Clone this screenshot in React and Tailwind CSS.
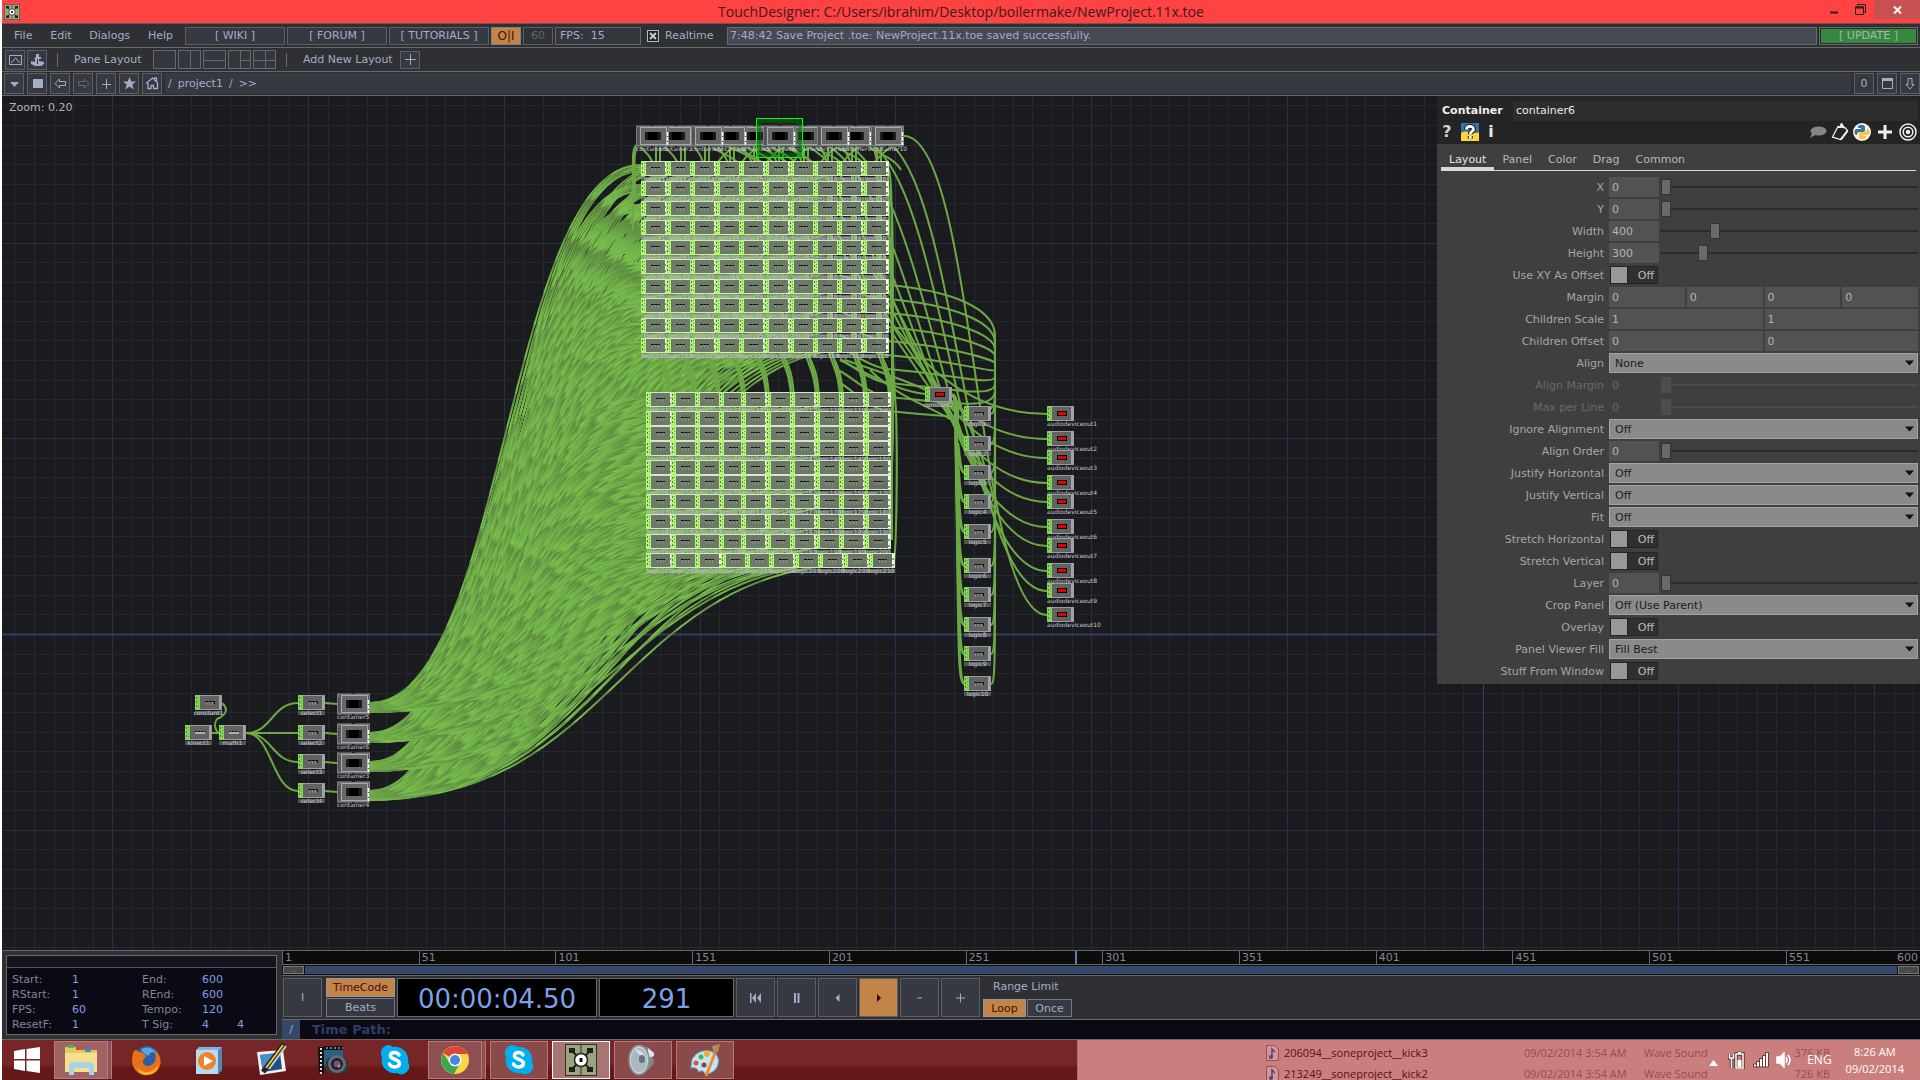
import React from 'react';

const GRID = 19.575;
const AXIS_X = 1482.6;
const AXIS_Y = 635;

const WIRE_PHASES = [0, 1, 2, 3, 4, 5, 6, 7];

const upperCols = [641, 666, 690, 715, 739, 764, 789, 813, 837, 862];
const upperRows = [161, 181, 201, 220, 240, 259, 279, 298, 318, 338];
const lowerCols = [646, 671, 695, 719, 741, 766, 790, 815, 839, 864];
const lastCols = [646, 671, 695, 721, 745, 769, 794, 818, 843, 868];
const lowerRows = [392, 411, 426, 441, 460, 475, 494, 514, 534, 553];
const topContainers = [654, 678, 709, 732, 756, 781, 807, 835, 857, 889];
// back to front
const containerOrder = [1, 4, 3, 6, 8, 0, 2, 5, 7, 9];
const logicRows = [406, 436, 465, 494, 524, 558, 587, 617, 646, 676];
const audioRows = [406, 431, 450, 475, 494, 519, 538, 563, 583, 607];
const sourceRows = [695, 725, 754, 783];
const sourceNames = ['container5', 'container6', 'container3', 'container4'];

const gridNodes = [];
upperRows.forEach((y, r) => upperCols.forEach((x, c) => gridNodes.push({ x, y, name: `logic${r * 10 + c + 11}` })));
lowerRows.forEach((y, r) =>
    (r === 9 ? lastCols : lowerCols).forEach((x, c) => gridNodes.push({ x, y, name: `logic${r * 10 + c + 111}` }))
);

const curve = (x1, y1, x2, y2) => {
    const mid = (x1 + x2) / 2;
    return `M${x1} ${y1}C${mid} ${y1} ${mid} ${y2} ${x2} ${y2}`;
};

const fanWires = [];
gridNodes.forEach((node, i) => {
    sourceRows.forEach((sy, s) => {
        fanWires.push({
            d: curve(370, sy + 8 + (i / 200) * 9, node.x, node.y + 4 + s * 2),
            color: `url(#wire${(i * 3 + s * 5 + (i >> 3)) % 8})`,
        });
    });
});

const columnWires = [];
topContainers.forEach((cx, c) => {
    const x = upperCols[c] + 27;
    columnWires.push(`M${cx - 14} 143C${cx - 18} 150 ${x - 10} 150 ${x - 10} 190V345C${x - 10} 360 ${x + 2} 360 ${x + 3} 400V540`);
    columnWires.push(`M${x - 12} 143V345C${x - 12} 360 ${x} 370 ${x} 400`);
    columnWires.push(`M${x - 8} 143V350C${x - 6} 370 ${x + 1} 370 ${x + 1} 400`);
    if (c > 2) {
        columnWires.push(`M${cx - 15} 143C${cx - 30} 150 ${cx + 2} 152 ${cx + 12} 170`);
        columnWires.push(`M${cx + 14} 143C${cx + 4} 146 ${cx - 10} 150 ${cx - 22} 176`);
    }
});

const sideWires = [
    'M636 145C632 150 633 160 633 175V230',
    'M638 145C634 150 634 160 635 185V200',
    'M888 168C892 172 892 200 892 330V480C892 520 890 540 888 541',
    'M888 188C893 192 893 230 893 330V430C893 440 891 500 889 520',
    'M888 172C891 260 890 340 896 410C898 470 896 550 894 560',
];

function WireGradients() {
    return (
        <defs>
            {WIRE_PHASES.map((p) => (
                <linearGradient
                    key={p}
                    id={`wire${p}`}
                    gradientUnits="userSpaceOnUse"
                    spreadMethod="repeat"
                    x1={p * 11}
                    y1={p * 13}
                    x2={p * 11 + 16 + p}
                    y2={p * 13 - 30 - p * 2}
                >
                    <stop offset="0" stopColor="#7abf4d" />
                    <stop offset=".4" stopColor="#70ae48" />
                    <stop offset=".85" stopColor="#5d8a41" />
                    <stop offset="1" stopColor="#7abf4d" />
                </linearGradient>
            ))}
        </defs>
    );
}

function GridLines() {
    const lines = [];
    for (let i = -75; i <= 90; i++) {
        const x = Math.round(AXIS_X + i * GRID) + 0.5;
        const color = i === 0 ? '#3b3c68' : i % 10 === 0 ? '#2d2d47' : '#27282f';
        lines.push(<path key={`v${i}`} d={`M${x} 96V2000`} stroke={color} />);
    }
    for (let i = -28; i <= 60; i++) {
        const y = Math.round(AXIS_Y + i * GRID) - 0.5;
        const color = i === 0 ? '#363868' : i % 10 === 0 ? '#2d2d47' : '#27282f';
        lines.push(<path key={`h${i}`} d={`M0 ${y}H3000`} stroke={color} strokeWidth={i === 0 ? 2 : 1} />);
    }
    return <g>{lines}</g>;
}

function Label({ x, y, anchor = 'middle', children }) {
    return (
        <text x={x} y={y} textAnchor={anchor} className="fill-[#c4c6ce] font-['DejaVu_Sans'] text-[6px]">
            {children}
        </text>
    );
}

function ChopNode({ x, y, name, variant = 'wave', labelAnchor, lit }) {
    return (
        <g transform={`translate(${x} ${y})`}>
            {labelAnchor !== 'start' && <rect y="16" width="27" height="4" fill={lit ? '#a2a6a2' : '#8b8d96'} opacity=".5" />}
            <rect width="27" height="15" fill={lit ? '#6f756c' : '#626262'} fillOpacity={lit ? 0.93 : 1} />
            <rect x=".5" y=".5" width="26" height="14" fill="none" stroke={lit ? '#d3ecbd' : '#9b9ca0'} />
            <rect width="5" height="15" fill={lit ? '#b4f47a' : '#86d35b'} />
            <path d="M1.5 2V14" stroke="#4f8238" strokeDasharray="2 2" />
            <path d="M3.5 2V14" stroke="#65a045" strokeDasharray="1 2" />
            <path d="M25 1V14" stroke={lit ? '#8f9488' : '#a4a5a8'} strokeWidth="2" />
            {lit && <path d="M25 1V14" stroke="#fcfff0" strokeWidth="2" strokeDasharray="4 2" />}
            {variant === 'red' && (
                <>
                    <rect x="10" y="5" width="10" height="5" fill="#000" />
                    <rect x="11" y="6" width="8" height="3" fill="#e00000" />
                </>
            )}
            {variant === 'wave' && (
                <>
                    <path d="M10 6.500H20" stroke="#0c0c0c" strokeWidth="1.200" strokeDasharray="3 .6" />
                    <path d="M11.500 7V10M14.500 7V10M17.500 7V10" stroke="#8c8c8c" />
                    <path d="M19.500 6V9" stroke={lit ? '#4f9434' : '#111'} />
                </>
            )}
            {variant === 'line' && (
                <>
                    <path d="M10 6.500H20" stroke="#111" strokeDasharray="2 1" />
                    <path d="M10 8H20" stroke="#fff" strokeWidth="1" />
                </>
            )}
            <Label x={labelAnchor === 'start' ? 0 : 13.5} y="20" anchor={labelAnchor}>
                {name}
            </Label>
        </g>
    );
}

function ContainerNode({ x, y, name, lit }) {
    return (
        <g transform={`translate(${x} ${y})`}>
            <path d="M0 -1.500H15M18 -1.500H33M0 19.500H15M18 19.500H33" stroke="#55565a" />
            <rect x=".5" y="-.5" width="32" height="19" fill="#5c5c5e" stroke="#7c7d80" />
            <rect x="4.500" y=".5" width="26" height="17" fill="#676769" stroke="#a9a9ab" />
            <path d="M2 3V16" stroke="#37383b" strokeDasharray="2 1" />
            <rect x="9" y="5" width="16" height="8" fill="#1c1c1e" />
            <rect x="12" y="5" width="10" height="8" fill="#000" />
            <path d="M31.500 5V18" stroke={lit ? '#f4ffe8' : '#c4c4c4'} strokeWidth="1.500" strokeDasharray="4 1" />
            <Label x="0" y="24" anchor="start">
                {name}
            </Label>
        </g>
    );
}

function Network() {
    return (
        <svg className="absolute inset-0 h-full w-full" role="img" aria-label="Operator network">
            <WireGradients />
            <g transform="translate(-2 -96)">
                <GridLines />
                <g fill="none" strokeWidth="2">
                    {fanWires.map((w, i) => (
                        <path key={i} d={w.d} stroke={w.color} />
                    ))}
                </g>
                <g fill="none" stroke="#6ca945" strokeWidth="2">
                    {columnWires.map((d, i) => (
                        <path key={i} d={d} />
                    ))}
                    {sideWires.map((d, i) => (
                        <path key={i} d={d} />
                    ))}
                    {/* containers to audio devices */}
                    {topContainers.map((cx, i) => (
                        <path key={i} d={curve(cx + 15, 136, 1047, audioRows[i] + 8)} />
                    ))}
                    {/* logic outputs looping back to the grid */}
                    {logicRows.map((y, i) => (
                        <path
                            key={i}
                            d={`M991 ${y + 8}C996 ${y + 8} 995 ${y - 20} 995 ${Math.min(y - 20, 420)}V${335 + i * 7}C994 ${308 + i * 13} 950 ${290 + i * 14} 887 ${285 + i * 14}C870 ${283 + i * 14} 850 ${280 + i * 12} 840 ${275 + i * 12}`}
                        />
                    ))}
                    {/* fan out of the red switch */}
                    {logicRows.map((y, i) => (
                        <path key={i} d={`M952 395C958 396 955 410 957 ${430 + i * 8}C959 ${y - 30} 958 ${y + 8} 965 ${y + 8}`} strokeWidth="3" />
                    ))}
                    <path d="M840 360C870 375 900 392 926 394M845 360C880 372 900 378 926 390M870 370C900 400 940 410 958 424M952 395C962 410 980 440 994 500M888 290C920 360 950 400 990 500M890 330C930 390 960 430 992 480" />
                    <path d="M222 703C232 712 220 718 217 719C213 724 216 732 219 733M212 733H219M325 703L337 704M325 733L337 734M325 762L337 763M325 791L337 792" />
                    {sourceRows.map((y) => (
                        <path key={y} d={curve(246, 733, 298, y + 8)} />
                    ))}
                </g>

                {gridNodes.map((n, i) => (
                    <ChopNode key={i} {...n} lit />
                ))}
                {containerOrder.map((i) => (
                    <ContainerNode key={i} x={topContainers[i] - 18} y={127} name={`container${i + 1}`} lit />
                ))}
                <rect x="759" y="121" width="41" height="34" fill="none" stroke="#006e0a" strokeOpacity=".5" strokeWidth="5" />
                <rect x="756.500" y="118.500" width="46" height="39" fill="none" stroke="#00ff00" />

                <ChopNode x={925} y={387} name="constant2" variant="red" />
                {logicRows.map((y, i) => (
                    <ChopNode key={y} x={964} y={y} name={`logic${i + 1}`} />
                ))}
                {audioRows.map((y, i) => (
                    <ChopNode key={y} x={1047} y={y} name={`audiodeviceout${i + 1}`} variant="red" labelAnchor="start" />
                ))}
                <ChopNode x={195} y={695} name="constant1" />
                <ChopNode x={185} y={725} name="kinect1" variant="line" />
                <ChopNode x={219} y={725} name="math1" variant="line" />
                {sourceRows.map((y, i) => (
                    <g key={y}>
                        <ChopNode x={298} y={y} name={`select${i + 1}`} />
                        <ContainerNode x={337} y={y} name={sourceNames[i]} lit />
                    </g>
                ))}
            </g>
        </svg>
    );
}

function DesignerLogo({ className }) {
    return (
        <svg className={className} viewBox="0 0 32 32">
            <rect width="32" height="32" fill="#2c3026" />
            <rect x="1" y="1" width="30" height="30" fill="#9aa57d" />
            <path d="M16 1V31" stroke="#2c3026" />
            <path d="M7 7L25 25M25 7L7 25" stroke="#20231c" strokeWidth="2" />
            <path d="M4 4h6v5H4zM22 4h6v5h-6zM4 23h6v5H4zM22 23h6v5h-6z" fill="#20231c" />
            <circle cx="16" cy="16" r="6.500" fill="#fff" stroke="#20231c" strokeWidth="1.500" />
            <rect x="14.500" y="14" width="3" height="4" fill="#111" />
        </svg>
    );
}

function TitleBar() {
    return (
        <header className="flex h-6 shrink-0 items-center border-b border-[#6b5558] bg-[#ff4343] text-[#3a1a1e]">
            <DesignerLogo className="ml-0.5 h-4 w-4" />
            <h1 className="flex-1 pl-20 text-center font-['Open_Sans',sans-serif] text-sm leading-5">
                TouchDesigner: C:/Users/ibrahim/Desktop/boilermake/NewProject.11x.toe
            </h1>
            <div className="flex h-full items-start">
                <button aria-label="Minimize" className="flex h-5 w-6 items-center justify-center">
                    <svg width="10" height="10"><path d="M1 7.500H9" stroke="#222" strokeWidth="2" /></svg>
                </button>
                <button aria-label="Restore" className="flex h-[18px] w-7 items-center justify-center">
                    <svg width="11" height="11" fill="none" stroke="#222">
                        <path d="M2.500 2V.5H10.500V8.500H9" />
                        <path d="M.5 3H8.500V10.500H.5Z" />
                        <path d="M0 3.500H9" strokeWidth="2" />
                    </svg>
                </button>
                <button aria-label="Close" className="flex h-[19px] w-[46px] items-center justify-center bg-[#c75050]">
                    <svg width="9" height="8"><path d="M1 .5L8 7.500M8 .5L1 7.500" stroke="#fff" strokeWidth="2" /></svg>
                </button>
            </div>
        </header>
    );
}

const boxButton = 'flex items-center justify-center border border-[#5d5f64] bg-[#363942] text-[#a3adc6]';

function MenuBar() {
    return (
        <nav className="flex h-6 shrink-0 items-center gap-0.5 border-b border-[#66686c] px-0.5">
            <div className="flex w-[179px] justify-between px-2.5">
                {['File', 'Edit', 'Dialogs', 'Help'].map((m) => (
                    <button key={m}>{m}</button>
                ))}
            </div>
            {['[ WIKI ]', '[ FORUM ]', '[ TUTORIALS ]'].map((m) => (
                <a key={m} href="#" className={`${boxButton} h-[18px] w-[100px]`}>
                    {m}
                </a>
            ))}
            <button className="h-[18px] w-[30px] border border-[#7d7f84] bg-[#c38449] text-xs leading-4 text-[#4a0d0d]">O|I</button>
            <button className="h-[18px] w-[30px] border border-[#5d5f64] bg-[#303237] text-[#62656d]">60</button>
            <div className="h-[18px] w-[86px] border border-[#66686c] bg-[#34363e] px-1 leading-4">FPS:&nbsp;&nbsp;15</div>
            <label className="flex w-[82px] items-center gap-1.5 pl-1">
                <span className="relative flex h-3 w-3">
                    <input type="checkbox" defaultChecked className="h-3 w-3 appearance-none border border-[#b4bac8] bg-[#202226]" />
                    <svg className="pointer-events-none absolute inset-0" width="12" height="12">
                        <path d="M3 3L9 9M9 3L3 9" stroke="#c3cadb" strokeWidth="2" />
                    </svg>
                </span>
                Realtime
            </label>
            <div className="h-[18px] flex-1 truncate border border-[#66686c] bg-[#464a54] px-0.5 leading-4">
                7:48:42 Save Project .toe: NewProject.11x.toe saved successfully.
            </div>
            <button className="h-[18px] w-[99px] border border-[#66686c] bg-[#37873f] text-[#a3b9b6] outline-1 -outline-offset-2 outline-[#26332a]">
                [ UPDATE ]
            </button>
        </nav>
    );
}

function LayoutBar() {
    const panes = ['', 'M11.500 0V18', 'M0 9.500H23', 'M11.500 0V18M12 9.500H23', 'M11.500 0V18M0 9.500H23'];
    return (
        <div className="flex h-6 shrink-0 items-center border-b border-[#66686c] pl-[3px]">
            <button aria-label="Palette" className={`${boxButton} h-5 w-5`}>
                <svg width="13" height="10" fill="none" stroke="currentColor">
                    <rect x=".5" y=".5" width="12" height="9" />
                    <path d="M2 7.500C5 7 5 3 6.500 3S8 7 11 7.500" />
                </svg>
            </button>
            <button aria-label="Network editor" className={`${boxButton} ml-0.5 h-5 w-5`}>
                <svg width="13" height="12" fill="currentColor">
                    <path d="M5 0h3v3h2v2H8v2l5 1v2l-3 2H4L0 10V7l4 1V5H3l2-2z" />
                    <path d="M6.500 5V10" stroke="#363942" />
                </svg>
            </button>
            <span className="ml-2.5 h-3.5 w-px bg-[#66686c]" />
            <span className="ml-4 w-[79px]">Pane Layout</span>
            <div className="flex gap-0.5">
                {panes.map((d, i) => (
                    <button key={i} aria-label={`Pane layout ${i + 1}`} className="border border-[#66686c] bg-[#34363d]">
                        <svg width="21" height="17" stroke="#66686c"><path d={d} /></svg>
                    </button>
                ))}
            </div>
            <span className="ml-2.5 h-3.5 w-px bg-[#66686c]" />
            <span className="ml-4 w-[97px] whitespace-nowrap">Add New Layout</span>
            <button aria-label="Add layout" className={`${boxButton} h-[18px] w-5`}>
                <svg width="11" height="11"><path d="M5.500 0V11M0 5.500H11" stroke="currentColor" /></svg>
            </button>
        </div>
    );
}

function PathBar() {
    const tools = [
        ['Pane type', <path key="a" d="M3 6H12L7.500 11Z" fill="currentColor" />],
        ['Stop', <rect key="a" x="3" y="3" width="10" height="9" fill="currentColor" />],
        ['Back', <path key="a" d="M2 7.500L6.500 3V5.500H12.500V9.500H6.500V12Z" fill="none" stroke="currentColor" />],
        ['Forward', <path key="a" d="M13 7.500L8.500 3V5.500H2.500V9.500H8.500V12Z" fill="none" stroke="#666a76" />],
        ['Add', <path key="a" d="M7.500 3V13M3 8.500H12" stroke="currentColor" />],
        ['Bookmark', <path key="a" d="M7.500 1L9.300 5.500H14L10.300 8.500L11.700 13.500L7.500 10.600L3.300 13.500L4.700 8.500L1 5.500H5.700Z" fill="currentColor" />],
        ['Home', <path key="a" d="M1 7.500L7.500 2L12.500 6.500V12.500H8.500V9.500H6V12.500H3V7M9 2H11.500V5" fill="none" stroke="currentColor" strokeWidth="1.300" />],
    ];
    return (
        <div className="flex h-6 shrink-0 items-center gap-[3px] border-b border-[#66686c] pl-0.5">
            {tools.map(([name, icon]) => (
                <button key={name} aria-label={name} className={`${boxButton} h-[21px] w-5`}>
                    <svg width="15" height="15">{icon}</svg>
                </button>
            ))}
            <div className="flex h-[21px] flex-1 items-center gap-1.5 bg-[#363942] px-[3px]">
                <span>/</span>
                <a href="#">project1</a>
                <span>/</span>
                <span>&gt;&gt;</span>
            </div>
            <button className={`${boxButton} h-[21px] w-5`}>0</button>
            <button aria-label="Float pane" className={`${boxButton} h-[21px] w-5`}>
                <svg width="11" height="11" fill="none" stroke="currentColor"><path d="M.5 1V10.500H10.500V1" /><path d="M0 1.500H11" strokeWidth="3" /></svg>
            </button>
            <button aria-label="Collapse pane" className={`${boxButton} h-[21px] w-5`}>
                <svg width="10" height="12" fill="none" stroke="currentColor"><path d="M3 .5H7V6.500H9L5 11L1 6.500H3Z" /></svg>
            </button>
        </div>
    );
}

const fieldClass = 'h-5 w-full min-w-0 bg-[#525252] pl-[3px] text-[#b4b4b4]';

function NumberSlider({ id, value, disabled }) {
    return (
        <>
            <input
                id={id}
                defaultValue={value}
                disabled={disabled}
                className={`h-5 w-[50px] pl-[3px] ${disabled ? 'bg-transparent text-[#6a6a6a]' : 'bg-[#525252] text-[#b4b4b4]'}`}
            />
            <input
                type="range"
                aria-label={`${id} slider`}
                max="2000"
                defaultValue={value}
                disabled={disabled}
                className={`h-4 min-w-0 flex-1 appearance-none bg-transparent [&::-webkit-slider-runnable-track]:h-0.5 [&::-webkit-slider-thumb]:-mt-[7px] [&::-webkit-slider-thumb]:h-4 [&::-webkit-slider-thumb]:w-2.5 [&::-webkit-slider-thumb]:appearance-none [&::-webkit-slider-thumb]:border ${
                    disabled
                        ? '[&::-webkit-slider-runnable-track]:bg-[#4b4b4b] [&::-webkit-slider-thumb]:border-[#4d4d4d] [&::-webkit-slider-thumb]:bg-[#4d4d4d]'
                        : '[&::-webkit-slider-runnable-track]:bg-[#2b2b2b] [&::-webkit-slider-thumb]:border-[#333] [&::-webkit-slider-thumb]:bg-[#6a6a6a]'
                }`}
            />
        </>
    );
}

function Toggle({ id }) {
    return (
        <span className="ml-px flex h-[18px] w-12 items-center justify-between border border-[#242424] bg-[#303030] pr-[3px] text-[#bdbdbd]">
            <input id={id} type="checkbox" className="h-4 w-[17px] appearance-none border-r border-[#242424] bg-[#989898]" />
            Off
        </span>
    );
}

function Menu({ id, value }) {
    return (
        <span className="relative flex-1">
            <select id={id} defaultValue={value} className="block h-5 w-full appearance-none border border-[#a3a3a3] bg-[#8a8a8a] pl-[5px] text-[#1c1c1c]">
                <option>{value}</option>
            </select>
            <svg className="pointer-events-none absolute right-1 top-[7px]" width="9" height="6"><path d="M0 0.500H9L4.500 5.500Z" fill="#111" /></svg>
        </span>
    );
}

const params = [
    ['X', 'num', 0],
    ['Y', 'num', 0],
    ['Width', 'num', 400],
    ['Height', 'num', 300],
    ['Use XY As Offset', 'toggle'],
    ['Margin', 'multi', [0, 0, 0, 0]],
    ['Children Scale', 'multi', [1, 1]],
    ['Children Offset', 'multi', [0, 0]],
    ['Align', 'menu', 'None'],
    ['Align Margin', 'off', 0],
    ['Max per Line', 'off', 0],
    ['Ignore Alignment', 'menu', 'Off'],
    ['Align Order', 'num', 0],
    ['Justify Horizontal', 'menu', 'Off'],
    ['Justify Vertical', 'menu', 'Off'],
    ['Fit', 'menu', 'Off'],
    ['Stretch Horizontal', 'toggle'],
    ['Stretch Vertical', 'toggle'],
    ['Layer', 'num', 0],
    ['Crop Panel', 'menu', 'Off (Use Parent)'],
    ['Overlay', 'toggle'],
    ['Panel Viewer Fill', 'menu', 'Fill Best'],
    ['Stuff From Window', 'toggle'],
];

function ParamRow({ label, kind, value }) {
    const first = kind === 'multi' ? `${label} 1` : label;
    return (
        <div className="flex h-5 items-center gap-[5px]">
            <label htmlFor={first} className={`w-[167px] shrink-0 text-right ${kind === 'off' ? 'text-[#6a6a6a]' : 'text-[#a6a6a6]'}`}>
                {label}
            </label>
            <div className="flex min-w-0 flex-1 items-center gap-0.5">
                {kind === 'num' && <NumberSlider id={label} value={value} />}
                {kind === 'off' && <NumberSlider id={label} value={value} disabled />}
                {kind === 'toggle' && <Toggle id={label} />}
                {kind === 'menu' && <Menu id={label} value={value} />}
                {kind === 'multi' &&
                    value.map((v, i) => (
                        <input key={i} id={`${label} ${i + 1}`} aria-label={`${label} ${i + 1}`} defaultValue={v} className={fieldClass} />
                    ))}
            </div>
        </div>
    );
}

function PythonMark({ help }) {
    return (
        <svg width="18" height="18" viewBox="0 0 18 18">
            {help ? (
                <>
                    <path d="M0 0H18V9C14 12 5 6 0 10Z" fill="#3572a5" />
                    <path d="M0 10C5 6 14 12 18 9V18H0Z" fill="#ffd43b" />
                    <path d="M5.500 6.500C5.500 2.500 12.500 2.500 12.500 6.200C12.500 8.500 9.300 8.500 9.300 11.200M9.300 13V15.500" fill="none" stroke="#222" strokeWidth="5" />
                    <path d="M5.500 6.500C5.500 2.500 12.500 2.500 12.500 6.200C12.500 8.500 9.300 8.500 9.300 11.200M9.300 13V15.500" fill="none" stroke="#fff" strokeWidth="2.800" />
                </>
            ) : (
                <>
                    <circle cx="9" cy="9" r="9" fill="#f2f2f2" />
                    <path d="M5 4C5 1 12 1 12 4V7C12 8 11 9 10 9H6C5 9 4 10 4 12H3C1 11 1 7 3 6H8V5H5Z" fill="#3572a5" />
                    <path d="M13 14C13 17 6 17 6 14V11C6 10 7 9 8 9H12C13 9 14 8 14 6H15C17 7 17 11 15 12H10V13H13Z" fill="#f7c63b" />
                </>
            )}
        </svg>
    );
}

function ParameterPanel() {
    return (
        <aside className="absolute right-0 top-0 w-[483px] bg-[#3f3f3f] pb-[3px]">
            <div className="bg-[#242424] pb-[3px] pt-1">
                <div className="flex h-5 items-center pt-px">
                    <span className="w-[76px] pl-[5px] font-bold text-[#eee]">Container</span>
                    <input aria-label="Operator name" defaultValue="container6" className="mr-0.5 h-5 min-w-0 flex-1 bg-[#2d2d2d] pl-[3px] text-[#e8e8e8]" />
                </div>
                <div className="flex items-center justify-between pl-1 pr-[3px] pt-[3px] font-bold text-[#e8e8e8]">
                    <div className="flex items-center gap-2">
                        <button className="w-3 text-base leading-[18px] text-[#d0d0d0]">?</button>
                        <button aria-label="Python help"><PythonMark help /></button>
                        <button className="w-2 text-base leading-[18px]">i</button>
                    </div>
                    <div className="flex items-center gap-1">
                        <button aria-label="Comment">
                            <svg width="18" height="14" fill="#858585"><ellipse cx="9.500" cy="6" rx="8" ry="4.500" /><path d="M3 8L1 13L8 9Z" /></svg>
                        </button>
                        <button aria-label="Clipboard">
                            <svg width="18" height="18" fill="none" stroke="#f0f0f0" strokeWidth="1.300"><path d="M7 3.500L1.500 14L9.500 16.500L16.500 7.500L14 4.500Z" /><path d="M7 4L9.500 4L10.500 1L13 5" strokeWidth="2" /><path d="M10 16.500L16.500 8" strokeWidth="2" /></svg>
                        </button>
                        <button aria-label="Python"><PythonMark /></button>
                        <button aria-label="Add parameter" className="mx-0.5">
                            <svg width="16" height="16" stroke="#eee" strokeWidth="3"><path d="M8 1V15M1 8H15" /></svg>
                        </button>
                        <button aria-label="Target">
                            <svg width="18" height="18" fill="none" stroke="#eee" strokeWidth="1.500"><circle cx="9" cy="9" r="8" /><circle cx="9" cy="9" r="4.800" /><circle cx="9" cy="9" r="1.500" fill="#eee" /></svg>
                        </button>
                    </div>
                </div>
            </div>
            <div className="mx-1 flex h-[27px] items-end border-b border-[#d8d8d8] text-[#b8b8b8]">
                {['Layout', 'Panel', 'Color', 'Drag', 'Common'].map((t, i) => (
                    <button
                        key={t}
                        className={`h-[22px] border-b-[3px] px-2 pt-1 ${i === 0 ? 'border-[#d8d8d8] text-[#e2e2e2]' : 'border-transparent'}`}
                    >
                        {t}
                    </button>
                ))}
            </div>
            <div className="flex flex-col gap-0.5 pr-0.5 pt-1.5">
                {params.map(([label, kind, value]) => (
                    <ParamRow key={label} label={label} kind={kind} value={value} />
                ))}
            </div>
        </aside>
    );
}

const timeSettings = [
    ['Start:', '1', 'End:', '600', ''],
    ['RStart:', '1', 'REnd:', '600', ''],
    ['FPS:', '60', 'Tempo:', '120', ''],
    ['ResetF:', '1', 'T Sig:', '4', '4'],
];

function TimeSettings() {
    return (
        <div className="w-[280px] shrink-0 p-1 pr-[5px]">
            <div className="flex h-full flex-col border border-[#66686c] bg-[#0b0a14]">
                <div className="h-[13px] border-b border-[#55565c] bg-[#15151f]" />
                <dl className="flex flex-1 flex-col justify-evenly pb-0.5 pl-[5px] pt-1 text-[#7f8795]">
                    {timeSettings.map(([a, av, b, bv, extra]) => (
                        <div key={a} className="flex leading-[15px]">
                            <dt className="w-[60px]">{a}</dt>
                            <dd className="w-[70px] text-[#7f9fe8]">{av}</dd>
                            <dt className="w-[60px]">{b}</dt>
                            <dd className="w-[35px] text-[#7f9fe8]">{bv}</dd>
                            <dd className="text-[#7f9fe8]">{extra}</dd>
                        </div>
                    ))}
                </dl>
            </div>
        </div>
    );
}

const transport = [
    ['To start', <path key="a" d="M1 0H2.500V10H1ZM7 0V10L3 5ZM12 0V10L8 5Z" />],
    ['Pause', <path key="a" d="M4 0H6V10H4ZM7.500 0H9.500V10H7.500Z" />],
    ['Reverse', <path key="a" d="M8.500 1V9L4.500 5Z" />],
    ['Play', <path key="a" d="M5 1V9L9 5Z" />],
    ['Step back', <path key="a" d="M4 4.500H9V5.500H4Z" />],
    ['Step forward', <path key="a" d="M2 4.500H11V5.500H2ZM6 0.500H7V9.500H6Z" />],
];

function Timeline() {
    const frames = [1, 51, 101, 151, 201, 251, 301, 351, 401, 451, 501, 551];
    return (
        <section className="flex h-[90px] shrink-0 border-y border-[#66686c]">
            <TimeSettings />
            <div className="flex min-w-0 flex-1 flex-col">
                <div className="relative flex h-3.5 border-b border-[#66686c] bg-[#0c0c0c] leading-3.5 text-[#85878c]">
                    {frames.map((f) => (
                        <span key={f} className={`w-0 border-l border-[#66686c] pl-0.5 ${f === 551 ? 'grow-49' : 'grow-50'}`}>
                            {f}
                        </span>
                    ))}
                    <span className="absolute right-0.5">600</span>
                    <span className="absolute inset-y-0 w-0.5 bg-[#5f7cb8]" style={{ left: `${(290 / 599) * 100}%` }} />
                </div>
                <div className="flex h-[11px] items-center gap-px border-b border-[#66686c] bg-[#101010] px-px">
                    <button aria-label="Range start" className="h-2 w-[21px] border border-[#77797c] bg-[#484848] text-[5px] leading-[5px] text-[#aaa]">...</button>
                    <div className="h-2 flex-1 bg-[#364869]" />
                    <button aria-label="Range end" className="h-2 w-[21px] border border-[#77797c] bg-[#484848] text-[5px] leading-[5px] text-[#aaa]">...</button>
                </div>
                <div className="flex flex-1 items-center gap-0.5 border-b border-[#66686c] pl-px">
                    <button className={`${boxButton} h-[39px] w-[39px] text-[#6c707b]`}>I</button>
                    <div className="ml-0.5 flex w-[69px] flex-col gap-px">
                        <button className="h-[19px] border border-[#96989c] bg-[#c38449] text-[#4a0d0d]">TimeCode</button>
                        <button className="h-[19px] border border-[#77797e] bg-[#363942]">Beats</button>
                    </div>
                    <output className="flex h-[39px] w-[200px] items-center justify-center border border-[#66686c] bg-black pt-1 text-[26px] text-[#7f9fe8]">
                        00:00:04.50
                    </output>
                    <output className="flex h-[39px] w-[135px] items-center justify-center border border-[#66686c] bg-black pt-1 text-[26px] text-[#7f9fe8]">
                        291
                    </output>
                    {transport.map(([name, icon]) => (
                        <button
                            key={name}
                            aria-label={name}
                            className={`flex h-[39px] w-[39px] items-center justify-center border border-[#5d5f64] ${
                                name === 'Play' ? 'bg-[#c38449] fill-[#3d0505]' : 'bg-[#363942] fill-[#a3adc6]'
                            }`}
                        >
                            <svg width="13" height="10">{icon}</svg>
                        </button>
                    ))}
                    <div className="flex flex-col gap-[3px] pl-px">
                        <span className="pl-2.5 leading-[18px]">Range Limit</span>
                        <div className="flex gap-px">
                            <button className="h-[18px] w-[43px] border border-[#96989c] bg-[#c38449] text-[#4a0d0d]">Loop</button>
                            <button className="h-[18px] w-[45px] border border-[#77797e] bg-[#363942]">Once</button>
                        </div>
                    </div>
                </div>
                <div className="flex h-[19px] items-center bg-[#0b0a14]">
                    <button className="h-full w-[18px] bg-[#364869]">/</button>
                    <span className="pl-3 text-[13px] font-bold text-[#2d3f66]">Time Path:</span>
                </div>
            </div>
        </section>
    );
}

function SkypeIcon() {
    return (
        <svg width="30" height="32" viewBox="0 0 30 32">
            <path d="M8 1A8 8 0 0 0 2 13A13 13 0 0 0 17 29A8 8 0 0 0 28 18A13 13 0 0 0 13 3A8 8 0 0 0 8 1Z" fill="#00aff0" />
            <path d="M19 11C17 7 10 8 10.500 12C11 16 19.500 15 19.500 19.500C19 24 11 24 9.500 20" fill="none" stroke="#fff" strokeWidth="3.500" strokeLinecap="round" />
        </svg>
    );
}

const apps = [
    ['Firefox', '', (
        <svg width="32" height="32" viewBox="0 0 32 32">
            <circle cx="16" cy="15" r="13" fill="#2a5ea8" />
            <path d="M10 6C14 2 22 3 25 9C21 7 18 9 18 12C15 11 12 9 10 6Z" fill="#57a7e0" />
            <path d="M3 7C5 5 6 6 8 8C12 8 13 10 15 12C14 15 11 15 12 19C15 24 22 22 24 17C25 14 25 11 23 6C30 10 32 20 26 27C19 34 7 32 3 24C0 18 1 11 3 7Z" fill="#e8711a" />
            <path d="M6 24C12 30 22 30 27 21C27 27 21 31 15 31C11 31 7 28 6 24Z" fill="#f6b62c" />
        </svg>
    )],
    ['Media Player', '', (
        <svg width="28" height="30" viewBox="0 0 28 30">
            <path d="M4 2H27V25L23 29H1V5Z" fill="#7eb4de" />
            <path d="M1 5H23V29H1Z" fill="#b8d9ef" />
            <path d="M23 5L27 2V25L23 29Z" fill="#4c87b8" />
            <circle cx="12" cy="16" r="9" fill="#f0822a" />
            <path d="M9 11L18 16L9 21Z" fill="#fff" />
        </svg>
    )],
    ['Drawing', '', (
        <svg width="32" height="34" viewBox="0 0 32 34">
            <path d="M2 9L28 7L31 28L5 32Z" fill="#f2f2f2" />
            <path d="M5 12L25 10L27 26L8 29Z" fill="#1d4d8c" />
            <path d="M5 12L20 10L12 22L8 27Z" fill="#4a8ccc" />
            <path d="M29 1L8 29" stroke="#222" strokeWidth="5" />
            <path d="M28 2L11 25" stroke="#e8c840" strokeWidth="2" />
            <path d="M31 3L14 26" stroke="#ccc" strokeWidth="2" />
        </svg>
    )],
    ['Video Editor', '', (
        <svg width="32" height="32" viewBox="0 0 32 32">
            <path d="M1 3H7V30L2 29Z" fill="#111" />
            <path d="M7 4L26 3V13L7 22Z" fill="#2c6080" />
            <path d="M4 4V30" stroke="#ddd" strokeWidth="2" strokeDasharray="2 2" />
            <path d="M7 4H26" stroke="#111" strokeWidth="4" />
            <path d="M9 4H26" stroke="#ddd" strokeDasharray="2 2" />
            <rect x="9" y="14" width="22" height="15" rx="4" fill="#33383e" />
            <circle cx="20" cy="20" r="9" fill="#666c74" />
            <circle cx="20" cy="20" r="6" fill="#18202a" />
            <circle cx="20" cy="20" r="3.500" fill="#71508c" />
            <circle cx="22" cy="22" r="1.500" fill="#d58a5a" />
        </svg>
    )],
    ['Skype', '', <SkypeIcon key="s" />],
    ['Chrome', 'group', (
        <svg width="30" height="30" viewBox="0 0 30 30">
            <circle cx="15" cy="15" r="14" fill="#f9d548" />
            <path d="M15 15L3 8A14 14 0 0 1 27.500 9H15Z" fill="#dc4437" />
            <path d="M3 8A14 14 0 0 0 14 29L20 18L9 17Z" fill="#3aa757" />
            <circle cx="15" cy="15" r="6.500" fill="#fff" />
            <circle cx="15" cy="15" r="5" fill="#4a86e0" />
        </svg>
    )],
    ['Skype window', 'open', <SkypeIcon key="s" />],
    ['TouchDesigner', 'active', <DesignerLogo key="t" className="h-8 w-8" />],
    ['Speakers', 'open', (
        <svg width="30" height="32" viewBox="0 0 30 32">
            <path d="M12 2L20 3L26 9V12L24 13C27 16 26 20 24 22L18 28L12 30Z" fill="#7e878e" />
            <path d="M20 4L26 9V12L20 14Z" fill="#dfe4e8" />
            <ellipse cx="11" cy="16" rx="10" ry="14.500" fill="#c9d1d7" stroke="#8a9299" strokeWidth="1.500" />
            <ellipse cx="11" cy="16" rx="8" ry="12" fill="#aab6c0" />
            <path d="M7 6C12 5 18 10 18 17L14 15C12 10 9 9 7 6Z" fill="#d8e0e6" />
            <ellipse cx="14" cy="15" rx="3" ry="4" fill="#66707a" />
        </svg>
    )],
    ['Paint', 'open', (
        <svg width="32" height="34" viewBox="0 0 32 34">
            <path d="M3 17C8 5 26 5 29 15C31 24 24 31 16 31C14 26 11 28 10 29C8 26 8 24 2 25Z" fill="#c4e4f4" stroke="#6bb0d2" />
            <circle cx="7" cy="20" r="2.500" fill="#e2503f" />
            <circle cx="12" cy="14" r="2.500" fill="#52b24b" />
            <circle cx="18" cy="11" r="3" fill="#f3b01c" />
            <circle cx="15" cy="22" r="2.500" fill="#7c4a4a" />
            <path d="M17 33L26 10" stroke="#ee8a2a" strokeWidth="3" />
            <path d="M23 3L31 1L29 9L25 11Z" fill="#b98a58" />
        </svg>
    )],
];

const appFrames = {
    '': 'w-[62px]',
    group: 'w-[54px] ml-0.5 mr-2 border border-[#b07c7c] bg-[#8d4f4f] shadow-[3px_0_0_#8d4f4f,4px_0_0_#b07c7c]',
    open: 'w-[58px] mr-1 border border-[#b07c7c] bg-[#8a4a4a]',
    active: 'w-[58px] mr-1 border border-white bg-[#a87474]',
};

const files = [
    ['206094__soneproject__kick3', '376 KB'],
    ['213249__soneproject__kick2', '726 KB'],
];

function Taskbar() {
    return (
        <footer className="flex h-10 shrink-0 overflow-hidden bg-linear-to-b from-[#762626] from-60% to-[#641818] to-70% font-['Open_Sans',sans-serif] text-[11px]">
            <div className="flex w-[1075px] shrink-0 items-center">
                <button aria-label="Start" className="flex w-[52px] items-center pl-3">
                    <svg width="26" height="26" fill="#fff"><path d="M0 4L11 2V12H0ZM12.500 2L26 0V12H12.500ZM0 13.500H11V24L0 22ZM12.500 13.500H26V26L12.500 24Z" /></svg>
                </button>
                <button aria-label="File Explorer" className="mr-2 flex h-[38px] w-[54px] items-center justify-center border border-[#b07c7c] bg-[#a06262] shadow-[3px_0_0_#8d4f4f,4px_0_0_#b07c7c]">
                    <svg width="34" height="32" viewBox="0 0 34 32">
                        <path d="M1 3H14L16 6H33V28H1Z" fill="#e4c766" />
                        <path d="M4 1H10V4H4Z" fill="#4db848" />
                        <path d="M12 3H18V6H12Z" fill="#d24a35" />
                        <path d="M21 5H27V8H21Z" fill="#3a8fd0" />
                        <path d="M1 9H33V28H1Z" fill="#f5e08e" />
                        <path d="M5 31V22C5 19 7 18 9 18H26C28 18 30 19 30 22V31H25V24H10V31Z" fill="#a6d3ea" />
                    </svg>
                </button>
                {apps.map(([name, state, icon]) => (
                    <button key={name} aria-label={name} className={`flex h-[38px] shrink-0 items-center justify-center ${appFrames[state]}`}>
                        {icon}
                    </button>
                ))}
            </div>
            <div className="relative flex flex-1 justify-end border-l border-[#b06a6a] bg-[#cb7e7e]">
                <table className="absolute right-[90px] top-0.5 border-collapse whitespace-nowrap text-[#974c50]">
                    <tbody>
                        {files.map(([name, size]) => (
                            <tr key={name} className="h-[21px]">
                                <td className="w-[18px] p-0">
                                    <svg width="13" height="16"><path d="M.5 .5H9L12.500 4V15.500H.5Z" fill="#d39595" stroke="#945055" /><path d="M6 12V4L9 7" fill="none" stroke="#5a4080" strokeWidth="1.500" /><circle cx="5" cy="12" r="2" fill="#5a4080" /></svg>
                                </td>
                                <td className="w-60 p-0 text-[#571016]">{name}</td>
                                <td className="w-[120px] p-0">09/02/2014 3:54 AM</td>
                                <td className="w-[90px] p-0">Wave Sound</td>
                                <td className="w-24 p-0 text-right">{size}</td>
                            </tr>
                        ))}
                    </tbody>
                </table>
                <div className="relative flex items-center gap-2.5 pr-4 text-xs text-white">
                    <svg className="mt-1.5" width="9" height="6"><path d="M0 6L4.500 0L9 6Z" fill="#fff" /></svg>
                    <svg width="17" height="18" fill="none" stroke="#fff" strokeWidth="1.500">
                        <path d="M8 3H15V17H8ZM10 1H13M1 3V7H6V3M3.500 7V17" stroke="#5d3030" strokeWidth="3.500" />
                        <path d="M8 3H15V17H8ZM10 1.500H13M1.500 3V7H5.500V3M3.500 7V17" />
                        <path d="M9.500 9H13.500V16H9.500Z" fill="#fff" stroke="none" />
                    </svg>
                    <svg className="-ml-0.5" width="17" height="16" fill="#fff" stroke="#6a3838"><path d="M.5 12h3v3h-3zM3.500 9.500h3V15h-3zM6.500 6.500h3V15h-3zM9.500 3.500h3V15h-3zM12.500 .5h3V15h-3z" /></svg>
                    <svg className="-ml-1" width="17" height="16" fill="none" stroke="#fff" strokeWidth="1.500"><path d="M1 5H4L8 1V15L4 11H1Z" fill="#fff" /><path d="M10 5Q12 8 10 11M12 3Q16 8 12 13" /></svg>
                    <span className="pl-1">ENG</span>
                    <time className="ml-1 text-center text-[11px] leading-[17px]">
                        8:26 AM
                        <br />
                        09/02/2014
                    </time>
                </div>
            </div>
        </footer>
    );
}

export default function App() {
    return (
        <div className="flex min-h-screen flex-col bg-[#2f3033] border-l-2 border-white font-['DejaVu_Sans',sans-serif] text-[11px] leading-[13px] text-[#a3adc6]">
            <TitleBar />
            <MenuBar />
            <LayoutBar />
            <PathBar />
            <main className="relative min-h-[600px] flex-1 overflow-hidden bg-[#1a1b1f]">
                <Network />
                <span className="absolute left-[7px] top-[5px] text-[#b4b4b4]">Zoom: 0.20</span>
                <ParameterPanel />
            </main>
            <Timeline />
            <Taskbar />
        </div>
    );
}
